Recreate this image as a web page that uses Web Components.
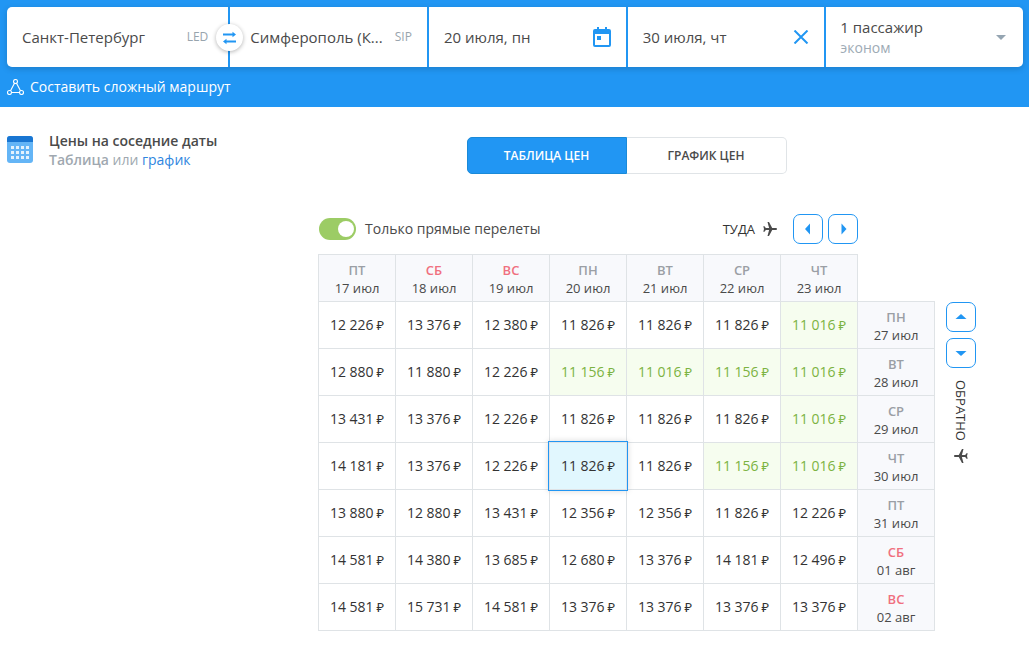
<!DOCTYPE html>
<html lang="ru">
<head>
<meta charset="utf-8">
<meta name="viewport" content="width=device-width, initial-scale=1">
<title>Цены на соседние даты</title>
<style>
  body {
    margin: 0;
    background: #fff;
    color: #4a4a4a;
    font-family: "Open Sans", "Noto Sans", sans-serif;
    font-size: 14px;
    line-height: 20px;
  }
</style>
</head>
<body>
<search-header></search-header>
<price-page></price-page>

<script>
const define = (name, html, setup) => {
  const template = document.createElement('template');
  template.innerHTML = html;
  customElements.define(name, class extends HTMLElement {
    connectedCallback() {
      if (this.shadowRoot) return;
      this.attachShadow({ mode: 'open' }).append(template.content.cloneNode(true));
      if (setup) setup(this, this.shadowRoot);
    }
  });
};

/* One cell of the search form: a text box, then a slotted code or icon */
define('search-field', `
  <style>
    :host { display: flex; align-items: center; gap: 12px; min-width: 0; height: 60px; padding: 0 15px; box-sizing: border-box; background: #fff; }
    input { flex: 1; min-width: 0; width: 0; margin: 0; padding: 0; border: 0; outline: 0; background: none; color: #4a4a4a; font: inherit; font-size: 15px; line-height: 20px; height: 24px; text-overflow: ellipsis; }
  </style>
  <input type="text">
  <slot></slot>
`, (host, root) => {
  const input = root.querySelector('input');
  input.value = host.getAttribute('value');
  input.setAttribute('aria-label', host.getAttribute('label'));
});

define('search-header', `
  <style>
    :host { display: block; padding: 7px 6px 10px 7px; background: #2196f3; }
    form { display: grid; grid-template-columns: 9fr 8fr 8fr 8fr 8fr; gap: 2px; border-radius: 5px; box-shadow: 0 2px 6px rgba(0, 0, 0, .16); }
    form > :first-child { border-radius: 5px 0 0 5px; position: relative; padding-right: 20px; }
    form > :nth-child(2) { padding-left: 20px; }
    .code { color: #98a4ad; font-size: 12px; line-height: 20px; }
    button { margin: 0; border: 0; padding: 0; font: inherit; background: #fff; cursor: pointer; }
    .swap { position: absolute; z-index: 1; top: 17px; right: -15px; width: 27px; height: 27px; border-radius: 50%; display: grid; place-items: center; box-shadow: 0 1px 4px rgba(0, 0, 0, .3); }
    .clear { display: block; background: none; }
    svg { display: block; flex: none; }
    .who { display: flex; align-items: center; justify-content: space-between; padding: 0 17px 0 14px; text-align: left; color: #4a4a4a; font-size: 15px; line-height: 20px; border-radius: 0 5px 5px 0; }
    .who small { display: block; font-size: 14px; line-height: 21px; color: #9eabb5; }
    .complex { display: flex; width: max-content; align-items: center; gap: 6px; margin-top: 9px; line-height: 21px; color: #fff; text-decoration: none; }
  </style>
  <form>
    <search-field label="Откуда" value="Санкт-Петербург">
      <span class="code">LED</span>
      <button class="swap" type="button" aria-label="Поменять города местами">
        <svg width="15" height="14" viewBox="0 0 15 14" fill="none" stroke="#2196f3" stroke-width="1.8"><path d="M1 3.500h11M3 10.500h11"/><path d="M10.500.700l3.500 2.800-3.500 2.800zM4.500 7.700L1 10.500l3.500 2.800z" fill="#2196f3" stroke="none"/></svg>
      </button>
    </search-field>
    <search-field label="Куда" value="Симферополь (К..."><span class="code">SIP</span></search-field>
    <search-field label="Дата вылета" value="20 июля, пн">
      <svg width="18" height="20" viewBox="0 0 18 20"><path fill="#2196f3" fill-rule="evenodd" d="M2 2h2V0h2v2h6V0h2v2h2a2 2 0 0 1 2 2v14a2 2 0 0 1-2 2H2a2 2 0 0 1-2-2V4a2 2 0 0 1 2-2zm0 5v11h14V7zm2 2h4v4H4z"/></svg>
    </search-field>
    <search-field label="Дата возвращения" value="30 июля, чт">
      <button class="clear" type="button" aria-label="Очистить дату"><svg width="16" height="14" viewBox="0 0 16 14" stroke="#2196f3" stroke-width="2" fill="none"><path d="M1.500.500l13 13M14.500.500l-13 13"/></svg></button>
    </search-field>
    <button class="who" type="button"><span>1 пассажир<small>эконом</small></span>
      <svg width="10" height="5" viewBox="0 0 10 5"><path fill="#95a5b2" d="M0 0h10L5 5z"/></svg></button>
  </form>
  <a class="complex" href="#route"><svg width="17" height="16" viewBox="0 0 17 16" fill="none" stroke="#fff" stroke-width="1.1"><circle cx="8.500" cy="2.500" r="2"/><circle cx="2.500" cy="13.500" r="2"/><circle cx="14.500" cy="13.500" r="2"/><path d="M7.500 4.300l-4 7.400M9.500 4.300l4 7.400M4.500 13.500h8"/></svg>Составить сложный маршрут</a>
`);

/* Square button with a small triangle; dir is left, right, up or down */
define('arrow-button', `
  <style>
    :host { display: block; }
    button { display: grid; place-items: center; box-sizing: border-box; width: 30px; height: 30px; margin: 0; padding: 0; border: 1px solid #2196f3; border-radius: 7px; background: #fff; cursor: pointer; }
    svg { display: block; }
  </style>
  <button type="button"><svg width="12" height="12" viewBox="0 0 12 12"><path fill="#2196f3"/></svg></button>
`, (host, root) => {
  const shapes = {
    left: 'M3 6l5-5.500v11z', right: 'M9.500 6l-5-5.500v11z',
    up: 'M6 3L.500 8h11z', down: 'M6 9L.500 4h11z'
  };
  root.querySelector('path').setAttribute('d', shapes[host.getAttribute('dir')]);
  root.querySelector('button').setAttribute('aria-label', host.getAttribute('label'));
});

define('plane-icon', `
  <style>
    :host { display: block; flex: none; }
    svg { display: block; }
    :host([back]) svg { transform: rotate(180deg); }
  </style>
  <svg width="14" height="14" viewBox="0 0 14 14"><path fill="#4a4a4a" d="M14 7c0-.7-.6-1-1.200-1H9.200L6 0H4.500l1.600 6H2.800L1.500 4.300H.300L1 7 .300 9.700h1.200L2.800 8h3.300l-1.600 6H6l3.200-6h3.600c.6 0 1.200-.3 1.200-1z"/></svg>
`);

define('toggle-switch', `
  <style>
    :host { display: block; }
    label { display: flex; align-items: center; gap: 9px; cursor: pointer; }
    input { appearance: none; display: flex; justify-content: flex-end; box-sizing: border-box; width: 37px; height: 22px; margin: 0; padding: 3px 2px; border-radius: 11px; background: #9ccc65; }
    input::before { content: ""; width: 16px; height: 16px; border-radius: 50%; background: #fff; }
    input:not(:checked) { justify-content: flex-start; background: #cfd8dc; }
  </style>
  <label><input type="checkbox" role="switch" checked><slot></slot></label>
`);

define('price-table', `
  <style>
    :host { display: block; }
    table { border-collapse: collapse; table-layout: fixed; width: 617px; }
    th, td { box-sizing: border-box; height: 47px; border: 1px solid #dfe3e6; text-align: center; vertical-align: middle; }
    th { padding: 2px 0 0; background: #f8f9fc; font-size: 13px; line-height: 18px; font-weight: 400; color: #4a4a4a; }
    th b { display: block; font-weight: 600; color: #9b9fa5; }
    th.off b { color: #f0707f; }
    .corner { border: 0; }
    td { padding: 0; font-size: 14px; line-height: 20px; color: #333; white-space: nowrap; }
    td span { font-size: 13px; margin-left: 3px; }
    .low { background: #f6fdef; color: #7cb342; }
    .chosen { position: relative; background: #e1f7fe; }
    .chosen::after { content: ""; position: absolute; inset: -2px; border: 1px solid #2196f3; box-shadow: 0 0 6px rgba(0, 0, 0, .15); }
  </style>
  <table><thead><tr></tr></thead><tbody></tbody></table>
`, (host, root) => {
  const head = (day, date, scope) =>
    `<th scope="${scope}"${/СБ|ВС/.test(day) ? ' class="off"' : ''}><b>${day}</b>${date}</th>`;
  const out = ['ПТ 17', 'СБ 18', 'ВС 19', 'ПН 20', 'ВТ 21', 'СР 22', 'ЧТ 23'];
  root.querySelector('thead tr').innerHTML =
    out.map(d => head(d.slice(0, 2), d.slice(3) + ' июл', 'col')).join('') + '<td class="corner"></td>';
  const rows = [
    ['ПН', '27 июл', '12226 13376 12380 11826 11826 11826 11016'],
    ['ВТ', '28 июл', '12880 11880 12226 11156 11016 11156 11016'],
    ['СР', '29 июл', '13431 13376 12226 11826 11826 11826 11016'],
    ['ЧТ', '30 июл', '14181 13376 12226 11826 11826 11156 11016'],
    ['ПТ', '31 июл', '13880 12880 13431 12356 12356 11826 12226'],
    ['СБ', '01 авг', '14581 14380 13685 12680 13376 14181 12496'],
    ['ВС', '02 авг', '14581 15731 14581 13376 13376 13376 13376']
  ];
  root.querySelector('tbody').innerHTML = rows.map(([day, date, prices], r) => '<tr>' +
    prices.split(' ').map((p, c) => {
      const cls = r === 3 && c === 3 ? 'chosen' : p < 11200 ? 'low' : '';
      return `<td class="${cls}">${p.slice(0, 2)} ${p.slice(2)}<span>₽</span></td>`;
    }).join('') + head(day, date, 'row') + '</tr>').join('');
});

define('price-page', `
  <style>
    :host { display: flex; align-items: flex-start; padding: 24px 0 18px; }
    aside { flex: none; box-sizing: border-box; width: 224px; padding: 0 0 0 7px; display: flex; gap: 16px; align-items: flex-start; }
    aside svg { flex: none; margin-top: 5px; }
    h2 { margin: 0; font-size: 14px; line-height: 19px; font-weight: 600; color: #4a4a4a; }
    p { margin: 0; line-height: 19px; color: #a0a8b0; }
    p b { font-weight: 600; }
    a { color: #2f86e0; text-decoration: none; }
    main { flex: 1; min-width: 0; display: flex; flex-direction: column; align-items: center; gap: 40px; padding-top: 6px; }
    .tabs { display: flex; }
    .tabs button { box-sizing: border-box; width: 160px; height: 37px; margin: 0; padding: 0; border: 1px solid #e0e4e7; background: #fff; color: #4a4a4a; font: inherit; font-size: 12px; font-weight: 600; cursor: pointer; }
    .tabs .on { border-color: #1a8ad8; border-radius: 5px 0 0 5px; background: #2196f3; color: #fff; }
    .tabs button:last-child { border-left: 0; border-radius: 0 5px 5px 0; }
    .grid { align-self: stretch; display: grid; grid-template-columns: 1fr 617px 1fr; }
    .bar { grid-column: 2; display: flex; align-items: center; gap: 5px; height: 30px; padding: 0 77px 10px 1px; }
    .way { display: flex; align-items: center; gap: 8px; margin: 0 11px 0 auto; font-size: 13px; color: #333; }
    price-table { grid-column: 2; }
    .back { display: flex; flex-direction: column; align-items: center; gap: 6px; width: 30px; padding: 48px 0 0 11px; }
    .back .way { flex-direction: column; margin: 6px 0 0; }
    .vert { writing-mode: vertical-rl; }
  </style>
  <aside>
    <svg width="26" height="27" viewBox="0 0 26 27"><rect width="26" height="27" rx="3" fill="#64b5f6"/><path d="M0 6V3a3 3 0 0 1 3-3h20a3 3 0 0 1 3 3v3z" fill="#1976d2"/><path d="M4 10h3v3H4zM9 10h3v3H9zM14 10h3v3h-3zM19 10h3v3h-3zM4 15h3v3H4zM9 15h3v3H9zM14 15h3v3h-3zM19 15h3v3h-3zM4 20h3v3H4zM9 20h3v3H9zM14 20h3v3h-3zM19 20h3v3h-3z" fill="#e3f2fd"/></svg>
    <div><h2>Цены на соседние даты</h2><p><b>Таблица</b> или <a href="#chart">график</a></p></div>
  </aside>
  <main>
    <div class="tabs"><button type="button" class="on">ТАБЛИЦА ЦЕН</button><button type="button">ГРАФИК ЦЕН</button></div>
    <div class="grid">
      <div class="bar">
        <toggle-switch>Только прямые перелеты</toggle-switch>
        <div class="way">ТУДА<plane-icon></plane-icon></div>
        <arrow-button dir="left" label="Раньше туда"></arrow-button>
        <arrow-button dir="right" label="Позже туда"></arrow-button>
      </div>
      <price-table></price-table>
      <div class="back">
        <arrow-button dir="up" label="Раньше обратно"></arrow-button>
        <arrow-button dir="down" label="Позже обратно"></arrow-button>
        <div class="way"><span class="vert">ОБРАТНО</span><plane-icon back></plane-icon></div>
      </div>
    </div>
  </main>
`);
</script>
</body>
</html>
